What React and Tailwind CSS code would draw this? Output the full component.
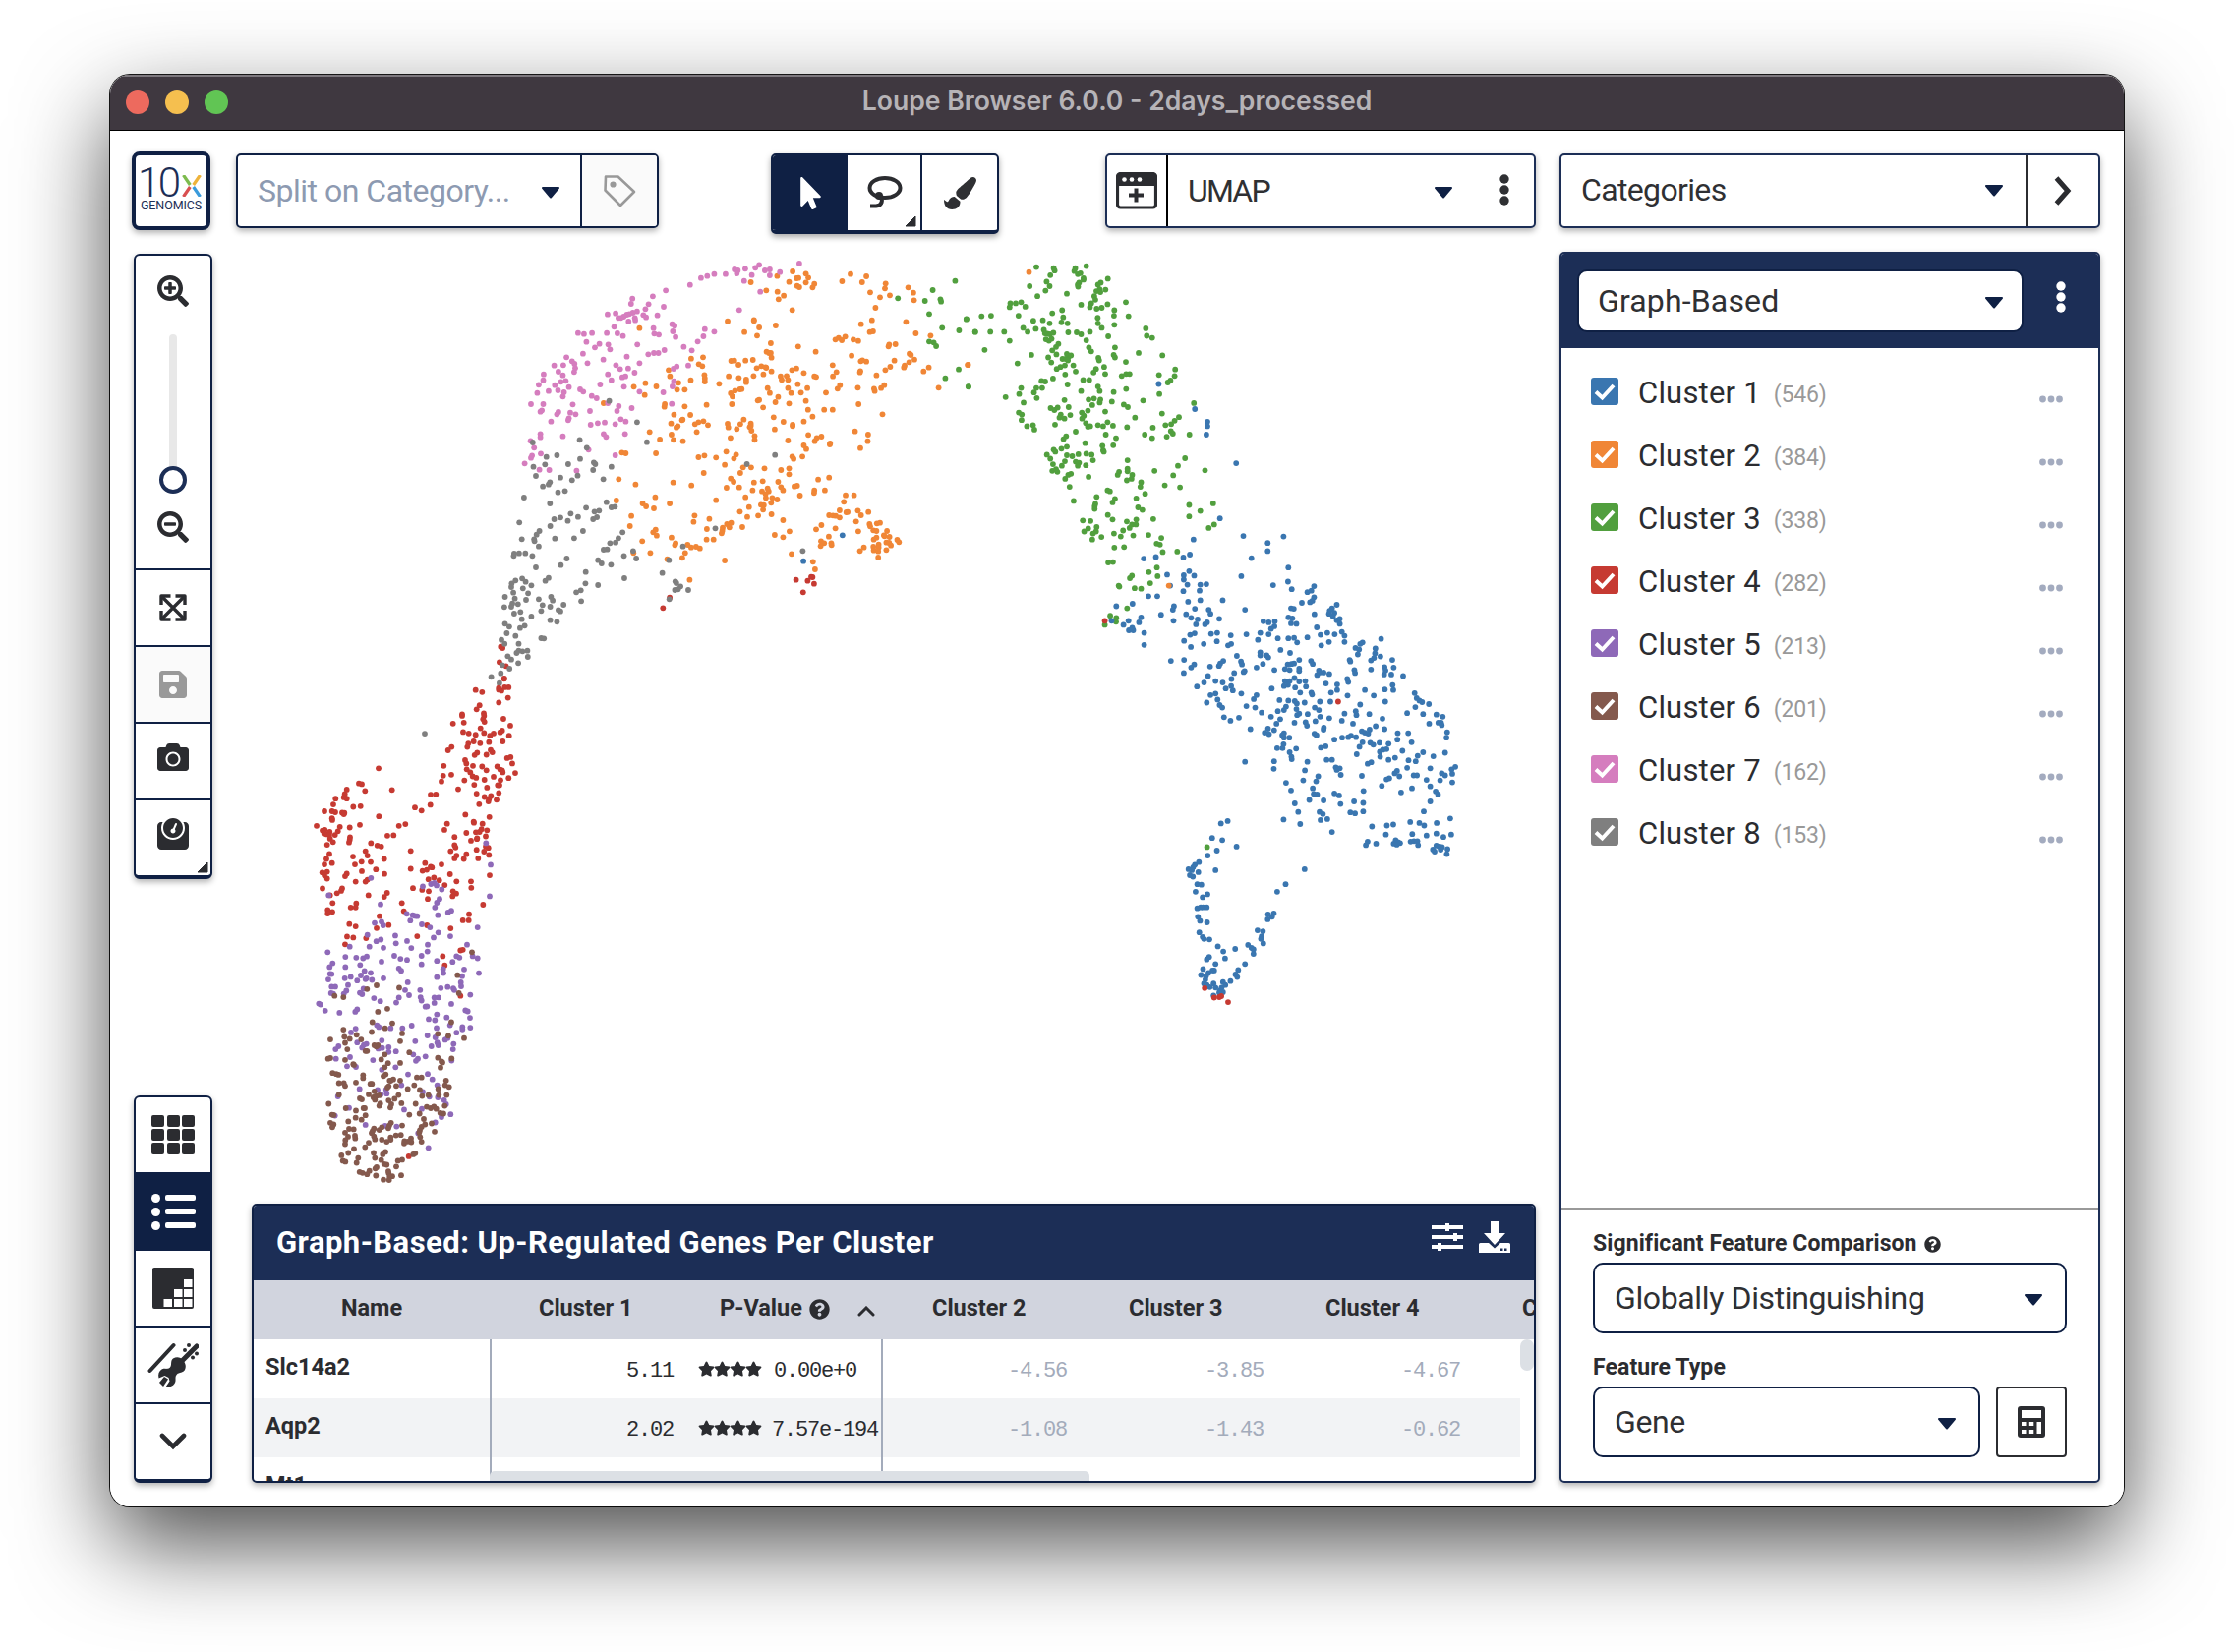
import React from "react";
import { FaSearchPlus, FaSearchMinus, FaSave, FaCamera, FaWeight, FaMousePointer, FaPaintBrush, FaQuestionCircle, FaStar } from "react-icons/fa";

const BLUE = "#3a76b0", ORANGE = "#f08636", GREEN = "#519f3e", RED = "#c63a32";
const PURPLE = "#8e69b8", BROWN = "#84594d", PINK = "#d57dbe", GRAY = "#7f7f7f";

// Each tile holds its own local coordinate space: origin (ox, oy) and units per pixel (sx, sy).
const TILES = [
  {
    ox: 480, oy: 240, sx: 2.8, sy: 3,
    series: [
      [ORANGE, "913,108 951,115 958,127 924,129 930,128 869,122 794,141 903,140 951,142 975,146 970,157 926,152 932,156 838,166 870,170 888,182 873,193 912,226 1078,116 1054,138 1123,123 1111,141 1178,145 1176,160 1134,172 1162,187 1190,181 1242,157 1257,173 1259,196 1149,219 1139,257 1108,269 1133,293 1142,291 1236,262 1264,297 1306,304 1063,307 1035,316 1044,311 1053,318 1086,316 1100,320 1188,331 1186,337 1206,330 1081,365 1246,359 1250,363 1260,377 1245,385 1232,395 1230,401 1203,380 1191,399 1177,409 1152,425 1107,382 1112,379 1123,383 1106,412 1105,416 1027,394 1038,415 1028,428 1048,455 1041,466 1099,463 1145,466 1147,473 1165,464 1174,455 1286,413 1301,401 1413,393 1329,463 1101,513 1169,544 1091,596 1128,606 1127,626 1106,647 728,260 803,256 803,259 818,279 776,293 812,304 865,273 851,327 929,337 979,353 477,281 839,353 846,357 851,357 853,371 800,378 779,380 759,393 738,381 747,380 624,374 658,370 646,391 656,397 560,409 564,428 588,448 623,440 662,424 663,434 663,444 704,451 606,469 584,469 494,449 525,459 461,460 492,485 549,513 548,521 606,520 668,515 731,428 760,433 781,438 781,446 802,427 811,403 824,397 838,402 836,400 853,413 830,422 842,464 848,479 879,428 882,439 896,427 900,439 911,409 924,404 945,418 975,428 980,430 928,452 955,464 900,464 909,479 937,478 1008,478 872,491 864,507 951,503 903,511 818,500 814,502 829,523 768,467 763,468 749,472 737,480 742,490 740,513 957,530 1003,530 1027,530 970,551 945,566 859,553 887,567 913,576 913,580 862,590 900,624 958,607 976,626 982,616 995,612 1019,636 1020,633 945,639 952,650 575,545 567,572 600,560 598,562 622,546 582,584 586,580 568,606 574,622 601,626 659,565 645,568 635,574 672,577 640,598 506,598 535,621 524,663 427,661 438,663 375,510 728,573 730,584 774,560 764,574 754,589 794,572 794,579 791,583 796,594 805,610 805,622 736,616 724,658 645,675 662,670 695,676 752,667 746,679 720,698 660,723 772,706 795,706 833,709 764,723 880,714 903,709 903,727 912,673 916,680 941,673 418,742 466,758 573,752 625,761 737,740 745,750 725,768 761,767 803,752 828,748 799,776 872,750 880,766 886,776 918,764 926,762 934,792 986,743 1017,737 1005,776 975,776 974,784 411,807 522,797 486,816 496,825 518,831 563,816 695,806 779,797 826,779 842,770 845,779 836,787 837,799 855,799 869,804 852,814 823,820 831,821 829,835 789,827 763,841 784,857 815,853 853,849 886,867 770,888 454,854 450,885 634,853 631,872 676,863 523,896 516,904 526,914 669,894 738,875 726,879 733,889 714,890 713,899 711,907 668,926 688,926 904,901 862,912 886,919 485,931 568,920 580,937 578,943 614,942 624,950 638,948 649,953 607,967 599,982 508,967 460,967 556,986 720,990 910,970 620,1049 971,994 977,1017 1064,791 1088,791 1059,811 1047,837 1070,842 1066,843 1099,838 1129,842 1108,852 1017,852 1028,853 1036,854 1047,859 995,882 980,895 1035,892 1094,871 1100,901 1132,879 1134,886 1153,877 1162,875 1143,898 1152,900 1182,900 1016,917 994,931 1003,937 993,946 1023,937 1024,943 1173,913 1175,916 1189,918 1152,920 1144,926 1180,935 1188,936 1193,944 1211,927 1216,934 1158,941 1143,948 1158,950 1144,959 1157,962 1180,958 1116,950 1105,961 1157,981"],
      [PINK, "932,84 877,110 848,102 848,120 834,105 818,88 807,97 797,119 778,100 775,137 748,102 757,105 754,114 722,116 690,116 670,122 652,128 621,149 552,166 515,184 503,208 494,223 457,191 453,207 546,216 528,242 488,241 496,248 470,230 458,234 448,238 441,240 432,246 424,250 417,250 409,236 386,239 446,261 464,250 465,257 405,277 384,296 342,296 319,299 302,296 414,297 430,305 517,281 519,298 532,301 570,269 577,274 572,291 580,308 663,284 659,306 690,292 643,322 626,349 603,338 548,348 531,357 518,357 502,361 471,331 441,368 477,388 388,331 393,346 363,329 350,340 326,323 316,359 374,377 329,388 269,370 285,382 292,390 294,403 291,415 260,394 234,395 246,414 259,425 267,442 253,445 204,422 203,440 190,454 186,479 236,455 218,473 245,471 262,477 276,461 259,490 308,468 317,475 341,488 355,495 365,453 397,440 387,422 410,394 422,406 445,404 463,417 428,431 437,428 433,460 477,475 168,513 203,513 199,532 195,536 287,514 246,537 242,544 280,539 295,544 276,556 274,562 225,566 336,534 387,510 418,519 413,534 455,525 424,559 438,566 408,574 378,569 358,571 338,576 375,604 382,613 436,604 195,604 195,614 259,611 167,625 177,646 196,664 171,670 168,677 150,694 192,713 220,714 298,716 332,652 408,669 583,398 574,405 616,395 575,443 571,459 545,477 569,512 821,170 761,226"],
      [RED, "82,1253 87,1257 78,1300 97,1312 92,1350 563,1103 544,1135 923,1049 966,1040 970,1041 956,1052 974,1061 943,1087"],
      [GRAY, "391,503 470,568 498,629 307,622 327,646 173,630 242,669 212,674 308,680 208,697 274,696 347,691 351,696 345,714 397,704 175,704 182,732 301,731 285,745 252,737 222,751 218,758 202,764 374,742 245,782 265,778 148,798 222,816 325,829 383,812 397,828 407,826 362,838 349,841 356,858 345,864 281,847 302,857 273,869 252,859 234,864 223,885 135,874 192,900 184,911 177,925 178,931 190,947 142,925 236,923 291,922 316,900 429,904 417,922 409,935 393,937 385,956 375,957 433,976 468,984 459,961 359,989 369,999 396,1003 120,969 119,976 134,968 152,968 172,976 270,984 253,1004 182,1011 324,1025 218,1043 209,1052 434,1044 359,1065 323,1060 310,1081 297,1087 311,1114 143,1045 124,1051 153,1055 113,1060 112,1071 169,1066 145,1075 118,1088 160,1090 94,1101 122,1106 154,1110 190,1108 225,1101 230,1112 201,1126 223,1131 197,1144 261,1125 246,1141 252,1145 131,1123 115,1121 112,1131 92,1132 138,1147 120,1152 169,1161 142,1169 223,1172 242,1177 94,1183 106,1192 150,1189 137,1196 99,1212 124,1220 197,1227 205,1228 84,1232 93,1244 133,1244 133,1265 144,1267 158,1265 127,1272 159,1284 102,1282 112,1292 132,1303 86,1309 107,1320 82,1334 55,1345 78,1364 601,947 561,989 542,1028 579,1054 582,1059 594,1069 578,1080 587,1078 616,1080 562,1108 693,892 783,696 863,668 942,961"],
      [GREEN, "1376,137 1312,165 1290,198 1213,190 1334,193 1336,200 1302,238 1339,280 1387,288 1408,253 1433,293 1302,322 1315,325 1322,336 1386,407 1348,434 1414,460"],
      [BLUE, "1055,913 944,992"],
    ],
  },
  {
    ox: 980, oy: 240, sx: 2.9037, sy: 1.96,
    series: [
      [GREEN, "215,62 266,64 269,69 330,64 327,70 362,60 337,76 345,74 256,78 245,91 254,100 242,109 195,100 354,84 354,87 341,93 337,97 338,101 305,115 426,85 405,93 397,97 392,110 402,106 404,112 419,107 218,120 386,120 389,127 479,132 347,137 377,134 373,142 425,136 445,148 444,159 408,143 393,145 396,163 397,174 408,183 445,177 487,160 170,132 154,134 138,134 136,142 182,141 8,166 53,160 81,159 162,159 34,191 79,191 120,191 62,227 136,209 176,183 189,191 206,169 213,185 234,168 254,174 262,154 291,148 294,162 289,172 307,174 237,187 240,194 247,195 255,196 265,193 309,192 334,192 347,196 373,191 362,208 427,200 243,206 252,209 260,205 280,215 273,221 262,228 200,237 159,254 274,236 250,242 259,252 538,184 541,199 557,203 370,222 377,230 447,222 443,237 447,242 517,233 587,238 479,251 305,235 311,240 317,238 292,245 302,245 308,248 299,258 286,261 275,265 324,258 331,270 398,243 400,248 415,261 391,265 384,272 418,275 625,266 623,279 577,277 611,288 603,292 467,279 480,275 490,275 300,276 264,284 230,289 241,290 353,287 371,287 307,296 397,300 402,309 347,309 443,311 480,305 578,315 170,303 164,315 215,303 232,303 208,312 216,323 177,332 124,321 14,300 298,327 369,326 385,324 404,326 402,332 380,337 438,330 473,336 485,341 530,328 680,333 257,343 268,347 278,342 310,341 287,356 283,362 298,364 315,357 367,348 349,352 355,358 350,364 418,350 586,354 506,362 163,352 172,356 171,367 187,379 205,377 209,386 270,376 361,373 367,380 374,379 397,377 412,379 425,371 441,378 483,381 596,377 613,375 623,368 636,361 559,382 612,389 618,394 600,400 667,396 535,396 557,403 420,396 450,403 442,417 331,390 303,399 295,405 359,413 410,418 412,427 414,430 246,436 256,444 266,426 271,430 289,424 305,420 305,437 321,439 339,435 362,434 378,436 382,447 331,450 341,452 337,458 299,449 290,458 264,455 262,468 273,465 277,470 361,457 369,480 317,474 309,476 300,484 313,500 325,528 484,447 459,470 455,476 484,464 484,469 498,476 496,484 482,487 564,468 654,443 633,458 619,477 594,497 639,501 713,467 524,491 522,500 536,514 510,523 425,507 432,509 393,520 447,524 440,531 389,534 387,539 387,544 515,541 528,546 426,556 440,565 666,536 699,548 666,559 737,533 740,575 724,582 560,564 352,567 375,568 510,565 482,569 497,575 509,575 490,582 368,583 356,589 393,580 391,589 382,593 380,605 407,600 471,587 444,593 464,599 501,597 546,596 584,602 570,613 580,615 588,630 631,629 445,621 474,620 427,651 441,650 571,661 547,670 573,678 551,692 497,677 491,682 458,697 460,699 505,702 524,703 483,742 433,757 451,761 450,769 417,775 719,1218"],
      [BLUE, "576,295 683,345 720,370 720,379 717,396 805,453 757,563 679,605 826,598 850,642 898,612 898,628 945,599 820,678 914,696 958,689 969,704 959,661 668,635 649,641 532,643 568,640 601,675 650,676 666,668 681,677 650,685 661,695 649,708 699,695 717,694 697,707 699,726 663,729 765,726 831,745 546,718 572,718 610,697 451,738 499,733 437,767 487,767 472,775 524,760 518,770 498,781 488,786 501,786 533,791 533,815 583,755 621,738 618,745 620,767 657,754 672,761 683,743 691,764 686,774 724,745 729,753 719,770 713,774 755,763 612,847 651,807 669,795 682,792 671,819 709,813 731,793 749,791 748,808 789,796 781,816 790,813 835,794 651,845 650,871 681,854 672,860 728,858 754,857 758,852 767,847 807,837 819,848 822,854 830,867 827,869 799,871 791,883 790,897 795,906 774,902 765,890 744,887 722,877 710,890 689,898 729,915 744,912 718,930 750,924 756,935 764,940 820,912 835,937 865,860 884,853 876,830 876,836 895,836 900,840 869,805 876,791 885,768 901,770 919,768 918,778 908,783 901,794 928,802 936,825 964,831 918,865 910,902 865,915 857,923 861,940 880,950 769,959 788,966 813,960 847,983 831,1048 908,958 924,972 935,963 928,947 946,945 933,925 952,938 959,926 978,927 983,943 984,932 1007,930 1035,698 1015,710 1027,707 1035,720 1030,727 1023,730 999,731 967,742 975,743 1036,754 959,760 971,762 967,772 983,773 959,802 976,801 985,810 1015,800 1043,780 1054,795 1074,791 1079,809 1056,816 1096,794 1117,789 1125,797 1125,809 1102,735 1088,742 1081,747 1079,753 1095,751 1091,758 1102,766 1111,763 1111,773 957,854 968,853 976,852 991,845 991,862 991,867 949,863 963,865 977,881 949,887 963,887 946,897 958,895 991,888 1009,887 1011,898 979,900 994,910 1026,847 1031,853 1049,866 1044,875 1051,870 1063,870 1080,873 1070,892 1103,894 1103,905 1085,910 1083,928 1052,928 1027,910 1029,914 1140,845 1142,848 1154,865 1156,871 1133,883 1136,889 1134,916 1185,905 1211,916 1245,928 1171,934 1157,821 1168,824 1164,834 1171,813 1178,810 1216,822 1215,832 1233,803 1231,838 1212,841 1203,846 1203,864 1243,859 1246,866 1242,874 1266,845 1270,860 1263,874 1267,895 1269,905 1244,904 1298,877 1332,911 1338,921 1346,926 1354,929 1374,933 1334,939 1310,951 1357,953 1375,972 1396,954 1415,958 1402,970 1410,970 1412,975 1428,989 1426,1000 1422,1030 917,985 899,982 889,990 902,993 946,991 941,995 946,1000 962,1000 945,1013 942,1021 926,1021 982,1022 963,1029 968,1038 969,1043 985,955 991,952 1016,953 977,970 1010,969 1014,976 1039,967 1053,958 1037,940 1049,945 1080,961 1064,980 1063,984 1036,992 1042,995 1117,966 1125,952 1158,947 1160,955 1150,972 1198,953 1217,977 1237,962 1243,983 1095,1004 1118,1000 1136,999 1144,996 1159,999 1176,987 1185,990 1195,992 1199,984 1178,1009 1169,1018 1161,1033 1201,1010 1210,1014 1228,1010 1255,1012 1229,1028 1238,1024 1249,1023 1230,1038 1255,1044 1274,1040 1282,991 1313,991 1281,1004 1323,1009 1296,1026 1055,1020 1069,1017 1015,1048 1072,1044 1088,1044 1099,1059 1111,1061 1102,1064 1114,1074 1204,1049 1193,1052 1314,1045 1341,1036 1357,1029 1335,1047 1310,1060 1387,1037 1378,1061 1280,1066 1273,1071 1287,1077 1257,1081 1249,1083 1235,1096 1329,1075 1339,1075 1367,1084 1378,1097 1412,1071 1422,1075 1407,1085 1441,1063 1452,1058 1443,1072 1443,1089 1394,1107 1401,1113 1378,1127 1324,1101 1292,1109 1359,1147 1437,1161 917,1047 916,1062 1008,1065 1003,1085 952,1090 967,1105 978,1131 988,1148 994,1172 945,1163 1047,1077 1041,1087 1031,1101 1034,1112 1044,1113 1021,1124 1063,1125 1095,1111 1109,1115 1113,1132 1176,1076 1181,1106 1153,1127 1180,1130 1180,1147 1142,1149 1156,1151 1051,1148 1061,1152 1054,1164 1074,1162 1088,1188 1206,1177 1250,1175 1269,1173 1247,1193 1193,1207 1188,1214 1218,1211 1319,1168 1346,1170 1360,1175 1397,1170 1325,1192 1367,1195 1396,1191 1417,1198 1440,1193 1270,1211 1276,1204 1283,1208 1289,1210 1279,1213 1320,1207 1330,1206 1340,1206 1342,1214 1396,1215 1405,1217 1413,1218 1386,1223 1391,1227 1409,1223 1429,1222 1427,1232 760,1171 780,1166 734,1200 764,1204 806,1217 748,1225 721,1235 744,1264 695,1248 683,1253 678,1258 664,1262 674,1264 693,1268 668,1274 677,1277 690,1292 702,1293 685,1307 706,1318 720,1312 690,1340 700,1338 707,1338 718,1338 692,1357 698,1365 719,1368 696,1388 706,1397 710,1401 726,1402 751,1416 767,1426 772,1440 802,1421 840,1413 850,1419 856,1422 856,1431 868,1384 884,1386 880,1396 878,1401 885,1410 899,1352 916,1350 911,1357 898,1362 926,1307 951,1292 1007,1262 831,1451 811,1463 803,1472 808,1477 788,1485 725,1437 718,1442 744,1451 707,1461 701,1473 740,1464 735,1464 723,1469 716,1475 714,1482 710,1490 718,1493 727,1497 738,1490 744,1498 757,1504 766,1487 773,1493 762,1498 766,1507 738,1514 755,1508"],
      [ORANGE, "193,72 12,257 606,697"],
      [RED, "417,767 1106,928 712,1499 740,1518 755,1517 761,1515 781,1527"],
    ],
  },
  {
    ox: 300, oy: 680, sx: 3, sy: 2.9037,
    series: [
      [RED, "638,30 622,57 640,55 652,55 630,65 622,62 551,63 571,69 650,86 622,100 563,108 554,120 576,132 577,139 510,135 510,139 515,159 482,162 574,149 578,157 636,148 657,168 566,176 513,187 530,191 551,195 577,190 606,191 595,198 626,188 632,183 653,198 634,215 592,217 565,220 545,215 529,221 526,231 478,231 467,241 556,248 548,255 597,240 602,247 584,254 647,264 658,261 663,280 519,270 523,280 454,287 543,287 571,289 584,300 617,289 626,298 632,300 634,306 672,308 524,297 535,306 452,316 477,313 447,333 517,330 542,318 553,322 578,328 606,319 627,329 652,323 547,343 619,344 624,344 586,351 498,356 554,369 622,367 598,376 578,379 592,385 590,392 615,387 562,400 414,372 430,371 413,402 366,410 386,419 255,294 296,358 195,339 204,341 214,361 158,357 152,370 149,380 158,384 124,384 117,401 178,408 200,406 90,421 113,421 123,424 144,425 151,426 149,430 256,436 113,442 114,447 66,464 137,467 167,469 198,461 317,464 337,459 282,493 301,492 84,478 91,476 89,487 97,489 106,482 105,491 131,480 122,491 107,502 116,512 98,520 168,498 167,505 165,513 232,515 251,522 263,525 215,539 221,552 353,538 105,547 96,562 113,574 90,578 177,555 203,570 183,578 231,571 272,562 273,606 247,593 204,598 397,574 353,591 389,597 402,594 414,585 418,587 447,578 83,602 98,600 90,610 98,620 158,605 153,613 185,629 215,629 221,623 84,649 144,649 141,656 128,663 107,669 224,669 281,662 272,674 115,692 114,718 100,713 100,723 187,693 170,705 185,705 326,692 332,716 258,731 249,766 286,757 166,754 185,761 159,791 178,794 153,814 217,796 403,758 373,790 520,431 593,438 464,458 456,476 487,497 545,452 546,455 572,458 523,485 569,474 586,477 563,482 552,483 582,495 537,508 556,501 555,503 487,521 490,528 475,539 493,552 487,560 515,562 523,548 554,535 559,560 577,540 582,525 590,529 592,550 594,610 473,607 407,622 424,617 440,625 457,639 388,653 408,657 360,648 405,680 493,628 537,628 538,647 482,657 492,664 481,672 574,697 531,725 512,743 530,743 475,767 505,832 512,830 451,849 457,876 505,966 347,1440"],
      [PURPLE, "583,515 597,579 594,672 232,618 103,669 390,643 415,636 425,633 432,640 448,652 441,680 433,691 427,705 436,728 467,720 477,715 261,696 341,724 359,728 366,730 373,731 352,744 387,755 412,764 264,747 243,751 269,758 221,786 306,788 437,779 423,794 474,790 557,764 525,815 248,805 262,800 308,811 342,804 167,821 227,821 270,824 355,825 405,815 404,835 100,837 154,851 187,853 208,855 219,850 264,865 303,848 322,857 342,860 386,848 386,873 433,863 481,866 493,849 502,853 542,849 557,855 115,870 106,881 154,881 199,875 107,901 112,902 102,918 152,914 170,910 190,921 201,906 212,893 231,898 215,917 218,914 235,919 270,914 317,885 324,892 344,926 433,911 452,887 453,899 516,888 510,908 561,899 506,926 507,938 162,934 112,939 123,939 157,951 149,960 110,958 117,960 209,945 198,957 205,961 241,973 260,982 309,986 317,971 336,949 348,964 382,949 383,970 386,980 445,943 466,940 483,944 486,949 535,963 425,971 438,971 425,987 477,990 398,998 403,997 73,989 78,992 92,1010 136,1016 190,1006 184,1013 433,1021 408,1035 427,1038 463,1030 520,1009 527,1012 534,1031 535,1060 473,1053 511,1058 511,1065 493,1075 356,1054 328,1062 292,1062 250,1053 256,1058 185,1063 171,1074 404,1083 432,1061 428,1089 367,1100 190,1104 265,1098 218,1108 210,1111 205,1119 133,1115 124,1124 286,1118 266,1120 254,1122 286,1132 308,1130 416,1115 434,1104 437,1112 458,1096 466,1091 484,1108 482,1124 361,1139 398,1145 375,1152 369,1158 125,1152 168,1147 238,1156 478,1157 159,1174 186,1176 307,1177 265,1184 345,1198 405,1197 419,1213 434,1230 325,1230 197,1241 131,1263 252,1244 278,1243 262,1257 280,1255 390,1250 410,1264 436,1266 455,1274 461,1286 165,1297 333,1302 387,1300 122,1320 475,1316 447,1324 428,1340 310,1352 215,1347 275,1350 376,1372 407,1415"],
      [BROWN, "540,837 496,905 500,958 249,935 220,946 318,942 121,966 148,970 282,1004 253,1013 236,1044 297,1047 275,1062 234,1073 327,1077 321,1100 477,1044 436,1078 468,1084 516,1091 148,1066 188,1081 151,1087 167,1093 202,1095 108,1095 153,1105 160,1124 242,1112 253,1112 248,1116 215,1129 220,1129 274,1139 349,1133 101,1152 108,1150 153,1155 178,1168 180,1170 263,1154 284,1165 321,1164 274,1177 436,1149 447,1160 450,1163 444,1178 478,1151 115,1194 126,1197 133,1199 208,1200 208,1209 277,1198 270,1203 289,1216 300,1213 321,1216 292,1217 372,1207 386,1207 134,1224 149,1224 153,1232 186,1222 230,1226 235,1226 286,1233 282,1237 309,1232 344,1241 364,1230 461,1216 458,1230 470,1235 437,1241 381,1244 388,1262 407,1259 439,1259 463,1259 134,1258 225,1257 242,1248 239,1266 244,1273 248,1262 257,1260 316,1259 304,1270 286,1275 294,1286 291,1296 260,1284 257,1291 198,1269 204,1272 103,1285 325,1283 368,1285 155,1298 186,1305 209,1298 213,1298 215,1319 185,1326 203,1332 402,1294 414,1298 424,1293 431,1300 457,1291 443,1312 453,1314 349,1317 380,1314 393,1330 113,1317 118,1318 108,1341 118,1346 114,1354 163,1337 165,1359 179,1360 153,1370 162,1382 183,1379 184,1387 154,1392 153,1404 241,1358 237,1365 234,1371 257,1362 265,1354 288,1349 293,1341 285,1357 327,1349 241,1381 244,1390 265,1391 292,1384 292,1391 280,1397 308,1378 323,1377 334,1395 333,1402 354,1387 355,1398 344,1396 397,1346 417,1343 386,1353 381,1363 379,1370 382,1383 386,1397 426,1367 225,1400 214,1413 180,1418 163,1430 142,1437 240,1430 276,1427 268,1434 367,1431 361,1434 193,1445 188,1459 146,1453 154,1456 244,1445 263,1451 314,1453 327,1450 272,1463 280,1465 309,1470 249,1472 245,1476 227,1483 197,1486 206,1489 220,1493 247,1497 285,1484 286,1490 297,1499 289,1500 324,1496 270,1509 287,1510"],
      [GRAY, "396,192"],
    ],
  },
];

const DOTS = TILES.flatMap(({ ox, oy, sx, sy, series }) =>
  series.flatMap(([color, pts]) =>
    pts.split(" ").map((p) => {
      const [x, y] = p.split(",").map(Number);
      return [color, ox + x / sx, oy + y / sy];
    })
  )
);

function Scatter() {
  return (
    <svg viewBox="240 240 1322 972" className="mt-[2px] block h-[972px] w-[1322px] shrink-0">
      {DOTS.map(([c, x, y], i) => (
        <circle key={i} cx={x.toFixed(1)} cy={y.toFixed(1)} r="2.9" fill={c} />
      ))}
    </svg>
  );
}

const Caret = ({ className = "" }) => (
  <svg viewBox="0 0 20 12" className={`h-[12px] w-[20px] shrink-0 ${className}`}>
    <path d="M2 1h16L10 10.5z" fill="#0f2044" stroke="#0f2044" strokeWidth="2" strokeLinejoin="round" />
  </svg>
);

const Kebab = ({ className = "" }) => (
  <svg viewBox="0 0 10 32" className={`h-[32px] w-[10px] shrink-0 ${className}`} fill="currentColor">
    <circle cx="5" cy="5" r="4.7" /><circle cx="5" cy="16" r="4.7" /><circle cx="5" cy="27" r="4.7" />
  </svg>
);

const Corner = ({ className = "" }) => (
  <svg viewBox="0 0 12 12" className={`absolute h-[12px] w-[12px] ${className}`}>
    <path d="M11 1v10H1z" fill="#2b2c30" stroke="#2b2c30" strokeLinejoin="round" />
  </svg>
);

function Logo() {
  return (
    <div className="flex h-[80px] w-[80px] flex-col items-center rounded-[8px] border-4 border-[#0f2044] bg-white pt-[7px] text-[#1c2e56] shadow-[0_3px_6px_rgba(0,0,0,0.3)]">
      <div className="flex h-[42px] w-[64px] items-end">
        <span className="-ml-[2px] w-[44px] shrink-0 text-[42px] font-light leading-[42px] tracking-[-2.5px] [font-family:Roboto,sans-serif]">10</span>
        <svg viewBox="0 0 20 22" className="mb-[7px] ml-[1px] h-[22px] w-[20px] shrink-0" fill="none" strokeWidth="3.2">
          <path d="M1.500 0l6.800 10" stroke="#7dbb4e" /><path d="M18.500 0l-6.800 10" stroke="#eeb33b" />
          <path d="M8.300 12L1.500 22" stroke="#d94f50" /><path d="M11.700 12l6.800 10" stroke="#3a9bdc" />
        </svg>
      </div>
      <div className="-mt-[5px] text-[12.500px] leading-[14px] tracking-[-0.100px] [font-family:Roboto,sans-serif]">GENOMICS</div>
    </div>
  );
}

const Cell = ({ children, className = "" }) => (
  <div className={`relative flex h-[78px] items-center justify-center border-t-2 border-[#0f2044] ${className}`}>{children}</div>
);

function ZoomBar() {
  return (
    <div className="ml-[2px] mt-[24px] h-[636px] w-[80px] overflow-hidden rounded-[6px] border-2 border-b-4 border-[#0f2044] bg-white text-[#2b2c30] shadow-[0_3px_6px_rgba(0,0,0,0.3)]">
      <div className="flex h-[318px] flex-col items-center pt-[20px]">
        <FaSearchPlus className="h-[32px] w-[32px]" />
        <div className="mt-[28px] h-[135px] w-[8px] rounded-t-full bg-[#e8e8e8]" />
        <div className="-mt-[1px] h-[28px] w-[28px] shrink-0 rounded-full border-4 border-[#1c2e56] bg-white" />
        <FaSearchMinus className="mt-[18px] h-[32px] w-[32px]" />
      </div>
      <Cell>
        <svg viewBox="0 0 28 28" className="h-[28px] w-[28px]" fill="none" stroke="currentColor" strokeWidth="3.4">
          <path d="M2 11V2h9.500M16.500 2H26v9M26 17v9h-9.500M11.500 26H2v-9" strokeLinejoin="round" />
          <path d="M3 3l22 22M25 3L3 25" />
        </svg>
      </Cell>
      <Cell className="bg-[#fafafa] text-[#999]"><FaSave className="h-[32px] w-[32px]" /></Cell>
      <Cell><FaCamera className="mb-[8px] h-[32px] w-[32px]" /></Cell>
      <Cell><FaWeight className="mb-[8px] h-[32px] w-[32px]" /><Corner className="bottom-[2px] right-[2px]" /></Cell>
    </div>
  );
}

function ViewBar() {
  return (
    <div className="ml-[2px] mt-auto flex h-[394px] w-[80px] flex-col rounded-[6px] border-2 border-b-4 border-[#0f2044] bg-white text-[#2b2c30] shadow-[0_3px_6px_rgba(0,0,0,0.3)]">
      <div className="flex h-[76px] items-center justify-center">
        <div className="grid grid-cols-3 gap-[2.500px]">
          {Array.from({ length: 9 }, (_, i) => <div key={i} className="h-[11.500px] w-[13px] rounded-[2px] bg-[#2b2c30]" />)}
        </div>
      </div>
      <div className="flex h-[80px] flex-col items-center justify-center gap-[5px] bg-[#0f2044]">
        {[0, 1, 2].map((i) => (
          <div key={i} className="flex items-center gap-[5px]">
            <div className="h-[9px] w-[9px] rounded-full bg-white" />
            <div className="h-[6px] w-[31px] rounded-[2px] bg-white" />
          </div>
        ))}
      </div>
      <div className="flex h-[76px] items-center justify-center">
        <svg viewBox="0 0 42 42" className="h-[42px] w-[42px]">
          <rect width="42" height="42" rx="2" fill="#2b2c30" />
          <g fill="#fff">
            <rect x="32" y="12" width="8.500" height="8" /><rect x="22" y="22" width="8.500" height="8" /><rect x="32" y="22" width="8.500" height="8" />
            <rect x="11.500" y="32" width="8.500" height="8" /><rect x="22" y="32" width="8.500" height="8" /><rect x="32" y="32" width="8.500" height="8" />
          </g>
        </svg>
      </div>
      <Cell>
        <svg viewBox="0 0 52 46" className="h-[46px] w-[52px]" fill="#2b2c30">
          <path d="M2.500 29L26.500 3" stroke="#2b2c30" strokeWidth="4" strokeLinecap="round" />
          <path d="M34 20L50 4" stroke="#2b2c30" strokeWidth="5" strokeLinecap="round" />
          <circle cx="42" cy="3" r="2" /><circle cx="38" cy="8" r="2" /><circle cx="50" cy="11.500" r="2" /><circle cx="46" cy="15.500" r="2" />
          <path d="M26 16.500c4-2.500 8-1 10 1.500s4 6 2 10c-1.500 3-6 2.500-8 4.500-3 3 0 6-2.500 9.500-2 3-6 4-9 3.500l4-6-1-3.500-4-2-6 2.500c-1-4 0-7 3-9 3-1.500 6 .5 8.500-2 2-2.500 0-6.500 3-9z" />
          <path d="M17 35l4 2.500-5 7.500-4-4z" />
        </svg>
      </Cell>
      <Cell>
        <svg viewBox="0 0 28 18" className="mb-[1px] h-[18px] w-[28px]" fill="none" stroke="#2b2c30" strokeWidth="4.600" strokeLinecap="round">
          <path d="M3 3l11 11L25 3" />
        </svg>
      </Cell>
    </div>
  );
}

const bar = "border-2 border-[#1c2e56] bg-white rounded-[5px] shadow-[0_3px_6px_rgba(0,0,0,0.3)]";

function TopBar() {
  return (
    <div className="mt-[2px] flex h-[82px] shrink-0 items-start text-[#2f3033]">
      <div className="flex h-[76px] w-[430px] overflow-hidden rounded-[5px] border-2 border-[#0f2044] bg-white shadow-[0_3px_6px_rgba(0,0,0,0.3)]">
        <div className="flex flex-1 items-center pl-[20px] pr-[20px]">
          <span className="flex-1 whitespace-nowrap text-[32px] tracking-[-0.500px] text-[#8d9ab1]">Split on Category...</span>
          <Caret className="mt-[3px]" />
        </div>
        <div className="flex w-[78px] items-center justify-center border-l-2 border-[#0f2044] bg-[#fafafa]">
          <svg viewBox="0 0 34 34" className="h-[34px] w-[34px]" fill="none" stroke="#999" strokeWidth="2.600" strokeLinejoin="round">
            <path d="M3 2.500h12.500L32 18 18 32 2.500 16.500z" /><circle cx="10.500" cy="10.500" r="1.800" fill="#999" />
          </svg>
        </div>
      </div>
      <div className="ml-[114px] flex h-[82px] w-[232px] overflow-hidden rounded-[5px] border-2 border-b-4 border-[#0f2044] bg-white shadow-[0_3px_6px_rgba(0,0,0,0.35)]">
        <div className="flex w-[76px] items-center justify-center bg-[#0f2044]">
          <FaMousePointer className="h-[33px] w-[21px] text-white" />
        </div>
        <div className="relative flex w-[74px] items-center justify-center">
          <svg viewBox="0 0 36 34" className="ml-[2px] h-[34px] w-[36px]" fill="none" stroke="#2b2c30" strokeWidth="4">
            <ellipse cx="18" cy="12" rx="15.500" ry="10" /><circle cx="12" cy="20" r="4" fill="#2b2c30" stroke="none" />
            <path d="M12 20c5 4 3 10-3 10.500H3" />
          </svg>
          <Corner className="bottom-[3px] right-[4px]" />
        </div>
        <div className="flex flex-1 items-center justify-center border-l-2 border-[#0f2044]">
          <FaPaintBrush className="h-[33px] w-[33px]" />
        </div>
      </div>
      <div className={`ml-[108px] flex h-[76px] w-[438px] ${bar}`}>
        <div className="flex w-[62px] items-center justify-center border-r-2 border-black">
          <svg viewBox="0 0 42 38" className="mb-[1px] h-[38px] w-[42px]">
            <rect x="1.500" y="1.500" width="39" height="34.500" rx="3" fill="#fff" stroke="#2b2c30" strokeWidth="3.200" />
            <path d="M1 3h40v11H1z" fill="#2b2c30" />
            <circle cx="8.500" cy="7.500" r="2.300" fill="#fff" /><circle cx="16" cy="7.500" r="2.300" fill="#fff" /><circle cx="24" cy="7.500" r="2.300" fill="#fff" />
            <path d="M20.500 16.500v14M13 23.500h15" stroke="#2b2c30" strokeWidth="4" />
          </svg>
        </div>
        <div className="flex flex-1 items-center pl-[20px] pr-[25px]">
          <span className="flex-1 text-[32px] tracking-[-1.800px]">UMAP</span>
          <Caret className="mt-[3px]" />
          <Kebab className="-mt-[2px] ml-[47px]" />
        </div>
      </div>
    </div>
  );
}

const COLS = ["Cluster 2", "Cluster 3", "Cluster 4", "Cluster 5"];
const ROWS = [
  { name: "Slc14a2", fc: "5.11", p: "0.00e+0", rest: ["-4.56", "-3.85", "-4.67"] },
  { name: "Aqp2", fc: "2.02", p: "7.57e-194", rest: ["-1.08", "-1.43", "-0.62"] },
  { name: "Mt1", fc: "", p: "", rest: [] },
];
const mono = "[font-family:'Liberation_Mono',monospace] text-[22px] tracking-[-1.2px]";

function GeneTable() {
  return (
    <div className="relative ml-[16px] mt-[12px] flex h-[284px] w-[1306px] shrink-0 flex-col overflow-hidden rounded-[5px] border-2 border-[#0f2044] bg-white text-[#2b2c30] shadow-[0_3px_6px_rgba(0,0,0,0.3)]">
      <div className="flex h-[76px] shrink-0 items-center bg-[#1c2e56] pl-[23px] pr-[24px] text-white">
        <span className="flex-1 text-[31px] font-bold tracking-[0.460px]">Graph-Based: Up-Regulated Genes Per Cluster</span>
        <svg viewBox="0 0 32 30" className="mb-[13px] h-[30px] w-[32px]" fill="none" stroke="#fff" strokeWidth="4">
          <path d="M0 5h32M0 15h32M0 25h32" /><path d="M16 1v8M24 11v8M8 21v8" />
        </svg>
        <svg viewBox="0 0 32 32" className="mb-[12px] ml-[16px] h-[32px] w-[32px]">
          <path d="M12 0h8v12h7L16 24 5 12h7z" fill="#fff" />
          <path d="M0 23.500a1.500 1.500 0 0 1 1.500-1.500H10l6 5.500L22 22h8.500a1.500 1.500 0 0 1 1.500 1.500V32H0z" fill="#fff" />
          <path d="M22 27.500h2.500v2.500H22zM26 27.500h2.500v2.500H26z" fill="#1c2e56" />
        </svg>
      </div>
      <div className="flex h-[60px] w-[1302px] shrink-0 items-center overflow-hidden bg-[#d1d4de] pb-[2px] text-[23.500px] font-bold">
        <div className="w-[240px] shrink-0 text-center">Name</div>
        <div className="w-[232px] shrink-0 pl-[50px]">Cluster 1</div>
        <div className="flex w-[168px] shrink-0 items-center whitespace-nowrap pl-[2px]">P-Value<FaQuestionCircle className="ml-[7px] h-[21px] w-[21px] shrink-0" />
          <svg viewBox="0 0 18 11" className="ml-[28px] mt-[4px] h-[11px] w-[18px] shrink-0" fill="none" stroke="#2b2c30" strokeWidth="3" strokeLinecap="round"><path d="M2 9l7-7 7 7" /></svg>
        </div>
        {COLS.map((c) => <div key={c} className="w-[200px] shrink-0 whitespace-nowrap pl-[50px]">{c}</div>)}
      </div>
      {ROWS.map((r, i) => (
        <div key={r.name} className={`flex h-[60px] w-[1288px] shrink-0 items-center ${i === 1 ? "bg-[#f2f3f5]" : ""}`}>
          <div className="flex h-full w-[240px] items-center pb-[3px] pl-[12px] text-[23.500px] font-bold">{r.name}</div>
          <div className={`flex h-full w-[400px] items-center border-x-2 border-[#a3abbb] pt-[5px] ${mono}`}>
            <span className="w-[185px] text-right">{r.fc}</span>
            {r.p && (
              <>
                <span className="ml-[25px] flex pb-[6px]">{[0, 1, 2, 3].map((k) => <FaStar key={k} className="-mr-[1px] h-[16px] w-[17px]" />)}</span>
                <span className={i === 0 ? "ml-[13px]" : "ml-[11px]"}>{r.p}</span>
              </>
            )}
          </div>
          {r.rest.map((v) => <div key={v} className={`w-[200px] pr-[13px] pt-[5px] text-right text-[#a3abbb] ${mono}`}>{v}</div>)}
        </div>
      ))}
      <div className="absolute bottom-0 left-[240px] h-[10px] w-[610px] rounded-t-[5px] bg-[#dce0e5]" />
      <div className="absolute right-0 top-[136px] h-[32px] w-[14px] rounded-[7px] bg-[#dce0e5]" />
    </div>
  );
}

const CLUSTERS = [
  ["Cluster 1", 546, BLUE], ["Cluster 2", 384, ORANGE], ["Cluster 3", 338, GREEN], ["Cluster 4", 282, RED],
  ["Cluster 5", 213, PURPLE], ["Cluster 6", 201, BROWN], ["Cluster 7", 162, PINK], ["Cluster 8", 153, GRAY],
];

function RightColumn() {
  return (
    <div className="ml-[24px] flex w-[550px] flex-col pt-[2px] text-[#2f3033]">
      <div className={`flex h-[76px] ${bar}`}>
        <div className="flex flex-1 items-center pb-[3px] pl-[20px] pr-[22px]">
          <span className="flex-1 text-[32px] tracking-[-0.650px]">Categories</span>
          <Caret className="mt-[3px]" />
        </div>
        <div className="flex w-[74px] items-center justify-center border-l-2 border-[#2b2c30]">
          <svg viewBox="0 0 18 30" className="h-[30px] w-[18px]" fill="none" stroke="#2b2c30" strokeWidth="5"><path d="M2.500 2L14 15 2.500 28" /></svg>
        </div>
      </div>
      <div className={`mt-[24px] flex h-[1252px] flex-col overflow-hidden ${bar}`}>
        <div className="flex h-[96px] shrink-0 items-start bg-[#1c2e56] pl-[16px] pt-[16px]">
          <div className="flex h-[64px] w-[454px] items-center rounded-[10px] border-2 border-[#0f2044] bg-white pl-[19px] pr-[18px]">
            <span className="flex-1 text-[32px] tracking-[0.150px]">Graph-Based</span>
            <Caret className="mt-[3px]" />
          </div>
          <Kebab className="ml-[33px] mt-[12px] text-white" />
        </div>
        <div className="flex flex-1 flex-col pt-[12px]">
          {CLUSTERS.map(([name, n, color]) => (
            <div key={name} className="flex h-[64px] items-center pl-[30px] pr-[36px]">
              <svg viewBox="0 0 28 28" className="h-[28px] w-[28px] shrink-0">
                <rect width="28" height="28" rx="3" fill={color} />
                <path d="M5 14.500l6.500 6L23 8" fill="none" stroke="#fff" strokeWidth="4" />
              </svg>
              <span className="ml-[20px] mt-[4px] text-[31px] tracking-[0.200px] text-[#2b2c30]">{name}</span>
              <span className="ml-[13px] mt-[8px] flex-1 text-[23px] tracking-[-0.200px] text-[#999]">({n})</span>
              <svg viewBox="0 0 24 8" className="mt-[16px] h-[8px] w-[24px]" fill="#a3abbf"><circle cx="3.500" cy="4" r="3.400" /><circle cx="12" cy="4" r="3.400" /><circle cx="20.500" cy="4" r="3.400" /></svg>
            </div>
          ))}
        </div>
        <div className="h-[278px] shrink-0 border-t-2 border-[#999] px-[32px] pt-[16px]">
          <div className="flex h-[36px] items-center pt-[2px] text-[23px] font-bold tracking-[0.090px] text-[#2b2c30]">
            <span className="whitespace-nowrap">Significant Feature Comparison</span>
            <FaQuestionCircle className="ml-[7px] h-[17px] w-[17px]" />
          </div>
          <div className="mt-[2px] flex h-[72px] w-[482px] items-center rounded-[10px] border-2 border-[#0f2044] pl-[20px] pr-[22px]">
            <span className="flex-1 text-[32px] tracking-[-0.370px]">Globally Distinguishing</span>
            <Caret className="mt-[3px]" />
          </div>
          <div className="mt-[16px] flex h-[36px] items-center pt-[2px] text-[23px] font-bold tracking-[0.090px] text-[#2b2c30]">Feature Type</div>
          <div className="mt-[2px] flex justify-between">
            <div className="flex h-[72px] w-[394px] items-center rounded-[10px] border-2 border-[#0f2044] pl-[20px] pr-[22px]">
              <span className="flex-1 text-[32px] tracking-[-0.400px]">Gene</span>
              <Caret className="mt-[3px]" />
            </div>
            <div className="flex h-[72px] w-[72px] items-center justify-center rounded-[4px] border-2 border-[#2b2c30]">
              <svg viewBox="0 0 28 32" className="h-[32px] w-[28px]">
                <rect width="28" height="32" rx="3" fill="#2b2c30" />
                <path d="M4 4h20v8H4zM4 16h4.500v4H4zM11.800 16h4.500v4h-4.500zM19.500 16H24v12h-4.500zM4 24h4.500v4H4zM11.800 24h4.500v4h-4.500z" fill="#fff" />
              </svg>
            </div>
          </div>
        </div>
      </div>
    </div>
  );
}

export default function App() {
  return (
    <div className="h-[1680px] w-[2272px] overflow-hidden bg-white pl-[112px] pt-[76px] [font-family:Roboto,sans-serif]">
      <div className="h-[1456px] w-[2048px] rounded-[20px] shadow-[0_0_0_1px_rgba(0,0,0,0.9),0_38px_94px_rgba(0,0,0,0.7)]">
        <div className="flex h-full w-full flex-col overflow-hidden rounded-[20px] bg-white">
          <div className="relative flex h-[57px] shrink-0 items-center border-b border-black bg-[#3f3840] pl-[16px] shadow-[inset_0_2px_0_#7d787e]">
            <div className="flex gap-[16px]">
              <div className="h-[24px] w-[24px] rounded-full bg-[#ed6a5e]" />
              <div className="h-[24px] w-[24px] rounded-full bg-[#f5bf4f]" />
              <div className="h-[24px] w-[24px] rounded-full bg-[#61c554]" />
            </div>
            <div className="mb-[3px] mr-[120px] flex-1 text-center text-[26.600px] font-semibold text-[#b6b3b7] [font-family:Inter,sans-serif]">Loupe Browser 6.0.0 - 2days_processed</div>
          </div>
          <div className="flex h-[1375px] pl-[22px] pt-[21px]">
            <div className="flex w-[106px] flex-col">
              <Logo />
              <ZoomBar />
              <ViewBar />
            </div>
            <div className="flex w-[1322px] flex-col">
              <TopBar />
              <Scatter />
              <GeneTable />
            </div>
            <RightColumn />
          </div>
        </div>
      </div>
    </div>
  );
}
